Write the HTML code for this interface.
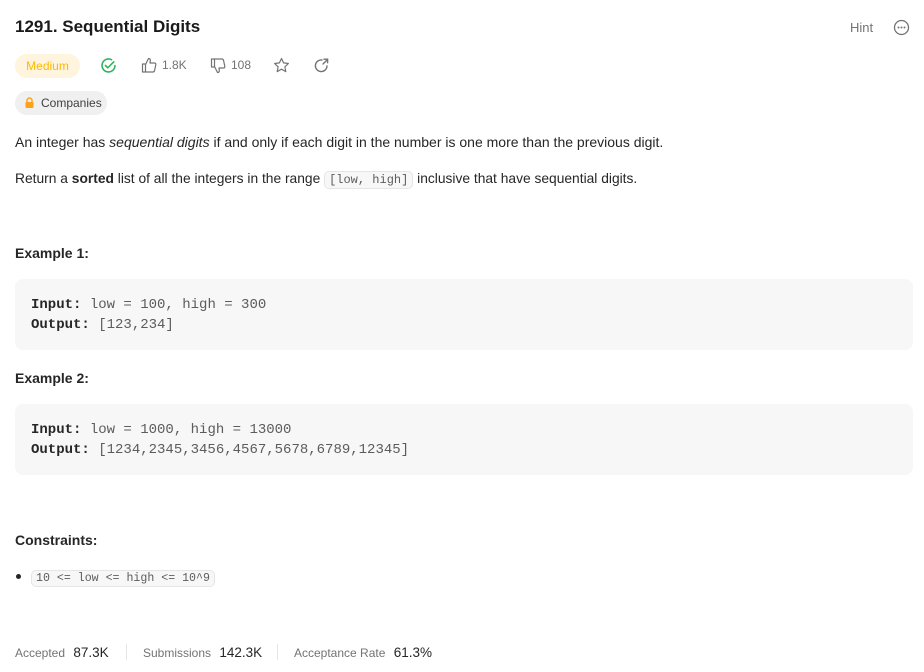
<!DOCTYPE html>
<html><head><meta charset="utf-8"><style>
body{margin:0;width:924px;height:672px;background:#fff;font-family:"Liberation Sans",sans-serif;color:#262626;position:relative;overflow:hidden}
.a{position:absolute;white-space:nowrap}
.pre{position:absolute;left:15px;width:898px;background:#f7f7f8;border-radius:8px;font-family:"Liberation Mono",monospace;font-size:14px;line-height:20px;color:#5c5c5c}
.pre b{color:#262626}
.ic{display:inline-block;border:1px solid #e5e5e5;background:#f7f7f8;border-radius:5px;font-size:12px;padding:1px 4px;color:#5c5c5c;font-family:"Liberation Mono",monospace}
</style></head><body>
<div class="a" style="left:15px;top:17px;font-size:17px;font-weight:600;color:#1a1a1a">1291. Sequential Digits</div>
<div class="a" style="left:850px;top:20px;font-size:13px;color:#737373">Hint</div>
<svg class="a" style="left:893px;top:19px" width="17" height="17" viewBox="0 0 17 17"><circle cx="8.5" cy="8.5" r="7" fill="none" stroke="#737373" stroke-width="1.3"/><circle cx="5.5" cy="8.5" r="1" fill="#737373"/><circle cx="8.5" cy="8.5" r="1" fill="#737373"/><circle cx="11.5" cy="8.5" r="1" fill="#737373"/></svg>
<div class="a" style="left:15px;top:54px;width:65px;height:24px;border-radius:12px;background:#fff4dd;color:#ffb800;font-size:12px;line-height:24px;text-align:center">Medium</div>
<svg class="a" style="left:100px;top:57px" width="17" height="17" viewBox="0 0 17 17"><path d="M15 8.5A6.5 6.5 0 1 1 11.5 2.7" fill="none" stroke="#2db55d" stroke-width="1.6" stroke-linecap="round"/><path d="M5.5 8.5l2.3 2.3 6-6" fill="none" stroke="#2db55d" stroke-width="1.6" stroke-linecap="round"/></svg>
<svg class="a" style="left:141px;top:57px" width="16" height="16" viewBox="0 0 16 16"><path d="M1.5 7h3v8h-3z M4.5 7.5L7.5 1.5c1.3 0 2 .8 1.8 2L9 6h4.5c1 0 1.5.8 1.300 1.7l-1.3 6c-.2.8-.8 1.3-1.6 1.3H4.5" fill="none" stroke="#737373" stroke-width="1.2" stroke-linejoin="round"/></svg>
<div class="a" style="left:162px;top:58px;font-size:12px;color:#737373">1.8K</div>
<svg class="a" style="left:210px;top:58px" width="16" height="16" viewBox="0 0 16 16"><path d="M1.5 1h3v8h-3z M4.5 8.5L7.5 14.5c1.3 0 2-.8 1.8-2L9 10h4.5c1 0 1.5-.8 1.3-1.7l-1.3-6C13.3 1.5 12.7 1 11.9 1H4.5" fill="none" stroke="#737373" stroke-width="1.2" stroke-linejoin="round"/></svg>
<div class="a" style="left:231px;top:58px;font-size:12px;color:#737373">108</div>
<svg class="a" style="left:273px;top:57px" width="17" height="17" viewBox="0 0 17 17"><path d="M8.5 1.5l2.1 4.4 4.8.6-3.5 3.3.9 4.8-4.3-2.4-4.3 2.4.9-4.8L1.6 6.5l4.8-.6z" fill="none" stroke="#737373" stroke-width="1.2" stroke-linejoin="round"/></svg>
<svg class="a" style="left:313px;top:57px" width="17" height="17" viewBox="0 0 17 17"><path d="M14 9A5.8 5.8 0 1 1 9 3" fill="none" stroke="#737373" stroke-width="1.4" stroke-linecap="round"/><path d="M10 7l4.5-4.5M11 2.2h3.6v3.6" fill="none" stroke="#737373" stroke-width="1.4" stroke-linecap="round"/></svg>
<div class="a" style="left:15px;top:91px;width:92px;height:24px;border-radius:12px;background:#f0f0f0;font-size:12px;line-height:24px;color:#404040"><svg style="position:absolute;left:10px;top:6px" width="9" height="11" viewBox="0 0 9 11"><path d="M2 5V3.5a2.5 2.5 0 0 1 5 0V5" fill="none" stroke="#ffa116" stroke-width="1.4"/><rect x="0.5" y="5" width="8" height="6" rx="1" fill="#ffa116"/></svg><span style="position:absolute;left:26px">Companies</span></div>
<div class="a" style="left:15px;top:134px;font-size:14px">An integer has <i>sequential digits</i> if and only if each digit in the number is one more than the previous digit.</div>
<div class="a" style="left:15px;top:171px;font-size:13.8px">Return a <b>sorted</b> list of all the integers in the range <span class="ic">[low, high]</span> inclusive that have sequential digits.</div>
<div class="a" style="left:15px;top:245px;font-size:14px;font-weight:bold">Example 1:</div>
<div class="pre" style="top:279px;height:71px"><div style="padding:16px 16px">
<b>Input:</b> low = 100, high = 300<br><b>Output:</b> [123,234]</div></div>
<div class="a" style="left:15px;top:370px;font-size:14px;font-weight:bold">Example 2:</div>
<div class="pre" style="top:404px;height:71px"><div style="padding:16px 16px">
<b>Input:</b> low = 1000, high = 13000<br><b>Output:</b> [1234,2345,3456,4567,5678,6789,12345]</div></div>
<div class="a" style="left:15px;top:532px;font-size:14px;font-weight:bold">Constraints:</div>
<div class="a" style="left:16px;top:574px;width:5px;height:5px;border-radius:50%;background:#262626"></div>
<div class="a" style="left:31px;top:568px"><span class="ic" style="font-size:11.6px">10 &lt;= low &lt;= high &lt;= 10^9</span></div>
<div class="a" style="left:15px;top:645px;font-size:12px;color:#737373">Accepted <span style="color:#262626;font-size:13.5px;margin-left:5px">87.3K</span></div>
<div class="a" style="left:126px;top:644px;width:1px;height:16px;background:#e5e5e5"></div>
<div class="a" style="left:143px;top:645px;font-size:12px;color:#737373">Submissions <span style="color:#262626;font-size:13.5px;margin-left:5px">142.3K</span></div>
<div class="a" style="left:277px;top:644px;width:1px;height:16px;background:#e5e5e5"></div>
<div class="a" style="left:294px;top:645px;font-size:12px;color:#737373">Acceptance Rate <span style="color:#262626;font-size:13.5px;margin-left:5px">61.3%</span></div>
</body></html>
